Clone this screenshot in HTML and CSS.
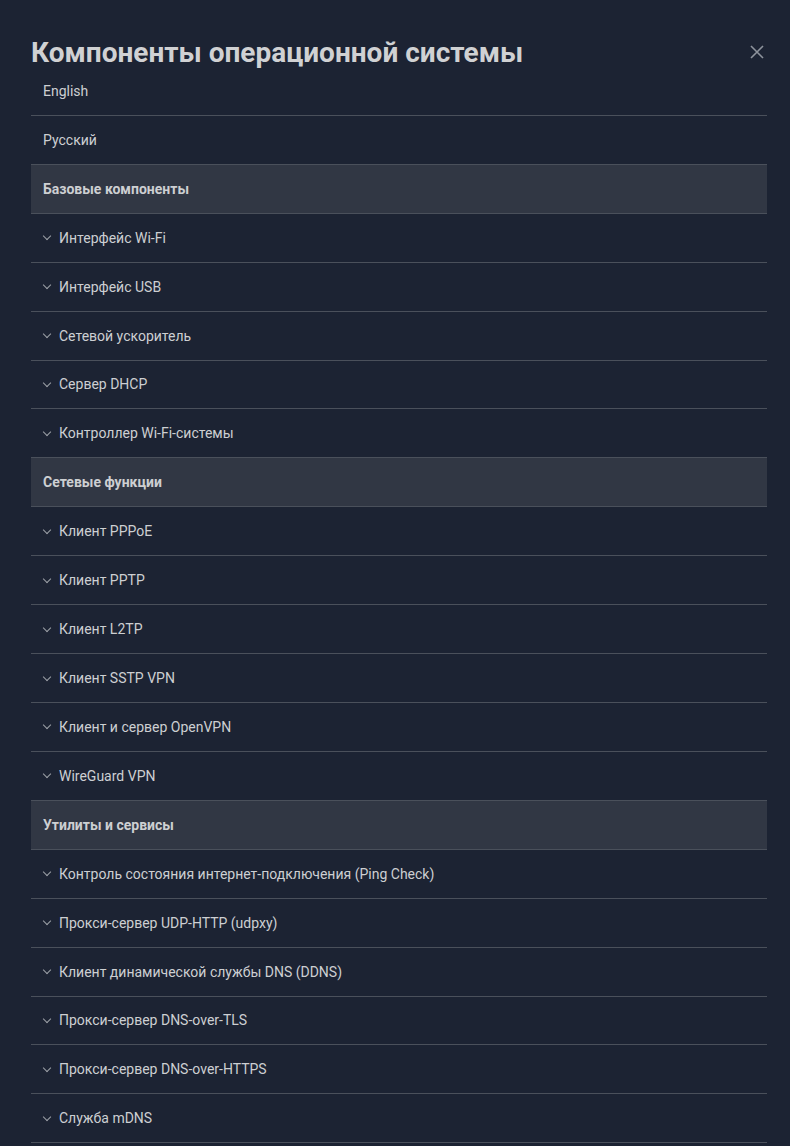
FILE: index.html
```html
<!DOCTYPE html>
<html lang="ru">
<head>
<meta charset="utf-8">
<link rel="stylesheet" href="styles.css">
</head>
<body>
<div class="dialog">
  <div class="head">
    <h1 class="title">Компоненты операционной системы</h1>
    <button class="close" aria-label="close">
      <svg width="14" height="14" viewBox="0 0 14 14"><path d="M1 1L13 13M13 1L1 13" stroke="#8d939c" stroke-width="1.6" fill="none"/></svg>
    </button>
  </div>
  <ul class="list">
    <li class="row plain">English</li>
    <li class="row plain">Русский</li>
    <li class="row group">Базовые компоненты</li>
    <li class="row"><span class="chev"></span>Интерфейс Wi-Fi</li>
    <li class="row"><span class="chev"></span>Интерфейс USB</li>
    <li class="row"><span class="chev"></span>Сетевой ускоритель</li>
    <li class="row"><span class="chev"></span>Сервер DHCP</li>
    <li class="row"><span class="chev"></span>Контроллер Wi-Fi-системы</li>
    <li class="row group">Сетевые функции</li>
    <li class="row"><span class="chev"></span>Клиент PPPoE</li>
    <li class="row"><span class="chev"></span>Клиент PPTP</li>
    <li class="row"><span class="chev"></span>Клиент L2TP</li>
    <li class="row"><span class="chev"></span>Клиент SSTP VPN</li>
    <li class="row"><span class="chev"></span>Клиент и сервер OpenVPN</li>
    <li class="row"><span class="chev"></span>WireGuard VPN</li>
    <li class="row group">Утилиты и сервисы</li>
    <li class="row"><span class="chev"></span>Контроль состояния интернет-подключения (Ping Check)</li>
    <li class="row"><span class="chev"></span>Прокси-сервер UDP-HTTP (udpxy)</li>
    <li class="row"><span class="chev"></span>Клиент динамической службы DNS (DDNS)</li>
    <li class="row"><span class="chev"></span>Прокси-сервер DNS-over-TLS</li>
    <li class="row"><span class="chev"></span>Прокси-сервер DNS-over-HTTPS</li>
    <li class="row"><span class="chev"></span>Служба mDNS</li>
  </ul>
</div>
</body>
</html>
```
FILE: styles.css
```css
html, body {
  margin: 0;
  padding: 0;
  background: #1c2333;
  overflow: hidden;
}
body {
  font-family: Roboto, "Liberation Sans", sans-serif;
  color: #cdcfd2;
}
.dialog {
  padding: 36px 23px 0 31px;
}
.head {
  display: flex;
  align-items: center;
  justify-content: space-between;
  height: 32px;
}
.title {
  margin: 0;
  font-size: 28px;
  font-weight: 700;
  color: #d0d1d3;
  letter-spacing: 0;
}
.close {
  background: none;
  border: 0;
  padding: 0;
  margin-right: 3px;
  width: 14px;
  height: 14px;
  display: flex;
  cursor: pointer;
}
.list {
  list-style: none;
  margin: -1px 0 0;
  padding: 0;
}
.row {
  height: 47.93px;
  border-bottom: 1px solid #4a505b;
  display: flex;
  align-items: center;
  padding-left: 12px;
  font-size: 14px;
  color: #cdcfd2;
}
.group {
  background: #313744;
  font-weight: 700;
  font-size: 14px;
  border-top: 1px solid #4a505b;
  margin-top: -1px;
}
.chev {
  width: 5px;
  height: 5px;
  border-right: 1px solid #9da1a8;
  border-bottom: 1px solid #9da1a8;
  transform: rotate(45deg);
  margin: -3px 9px 0 1px;
}
```
